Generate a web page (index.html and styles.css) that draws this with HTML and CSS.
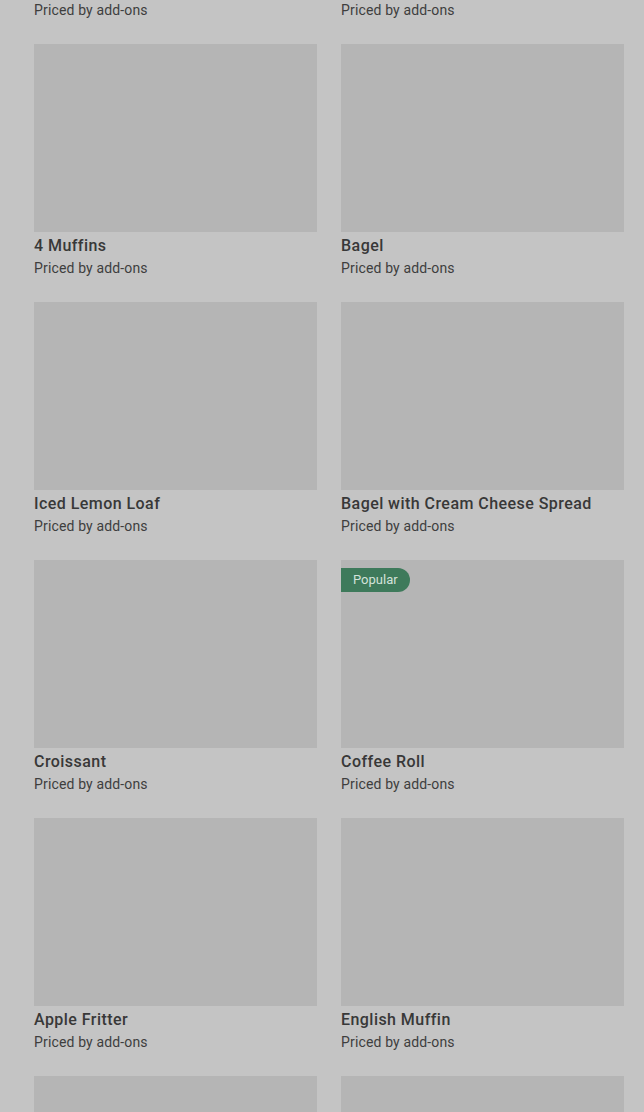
FILE: index.html
```html
<!DOCTYPE html>
<html lang="en">
<head>
    <meta charset="UTF-8">
    <meta name="viewport" content="width=device-width, initial-scale=1.0">
    <title>Bakery</title>
    <link rel="stylesheet" href="styles.css">
</head>
<body>
    <div class="menu-grid">
        <div class="product-card partial">
            <p class="product-price">Priced by add-ons</p>
        </div>
        <div class="product-card partial">
            <p class="product-price">Priced by add-ons</p>
        </div>

        <div class="product-card">
            <div class="product-image"></div>
            <h3 class="product-name">4 Muffins</h3>
            <p class="product-price">Priced by add-ons</p>
        </div>
        <div class="product-card">
            <div class="product-image"></div>
            <h3 class="product-name">Bagel</h3>
            <p class="product-price">Priced by add-ons</p>
        </div>

        <div class="product-card">
            <div class="product-image"></div>
            <h3 class="product-name">Iced Lemon Loaf</h3>
            <p class="product-price">Priced by add-ons</p>
        </div>
        <div class="product-card">
            <div class="product-image"></div>
            <h3 class="product-name">Bagel with Cream Cheese Spread</h3>
            <p class="product-price">Priced by add-ons</p>
        </div>

        <div class="product-card">
            <div class="product-image"></div>
            <h3 class="product-name">Croissant</h3>
            <p class="product-price">Priced by add-ons</p>
        </div>
        <div class="product-card">
            <div class="product-image">
                <span class="badge">Popular</span>
            </div>
            <h3 class="product-name">Coffee Roll</h3>
            <p class="product-price">Priced by add-ons</p>
        </div>

        <div class="product-card">
            <div class="product-image"></div>
            <h3 class="product-name">Apple Fritter</h3>
            <p class="product-price">Priced by add-ons</p>
        </div>
        <div class="product-card">
            <div class="product-image"></div>
            <h3 class="product-name">English Muffin</h3>
            <p class="product-price">Priced by add-ons</p>
        </div>

        <!-- next row, only the top of the pictures is in view -->
        <div class="product-card">
            <div class="product-image"></div>
        </div>
        <div class="product-card">
            <div class="product-image"></div>
        </div>
    </div>
</body>
</html>
```

FILE: styles.css
```css
body {
    font-family: Roboto, "Liberation Sans", sans-serif;
    margin: 0;
    padding: 0;
    background: #c4c4c4;
    height: 1112px;
    overflow: hidden;
}

.menu-grid {
    display: grid;
    grid-template-columns: 283px 283px;
    column-gap: 24px;
    row-gap: 24px;
    padding: 0 20px 0 34px;
}

.product-card {
    display: flex;
    flex-direction: column;
}

.product-image {
    position: relative;
    height: 188px;
    background-color: #b5b5b5;
}

.badge {
    position: absolute;
    top: 8px;
    left: 0;
    height: 24px;
    line-height: 24px;
    padding: 0 12px;
    border-radius: 0 12px 12px 0;
    background-color: #3e7a5b;
    color: #d3e2da;
    font-size: 13px;
}

.product-name {
    margin: 0;
    padding-top: 2px;
    font-size: 16px;
    font-weight: 500;
    line-height: 24px;
    letter-spacing: 0.45px;
    color: #383838;
}

.product-price {
    margin: 0;
    font-size: 14px;
    line-height: 20px;
    letter-spacing: 0.15px;
    color: #3e3e3e;
}
```
